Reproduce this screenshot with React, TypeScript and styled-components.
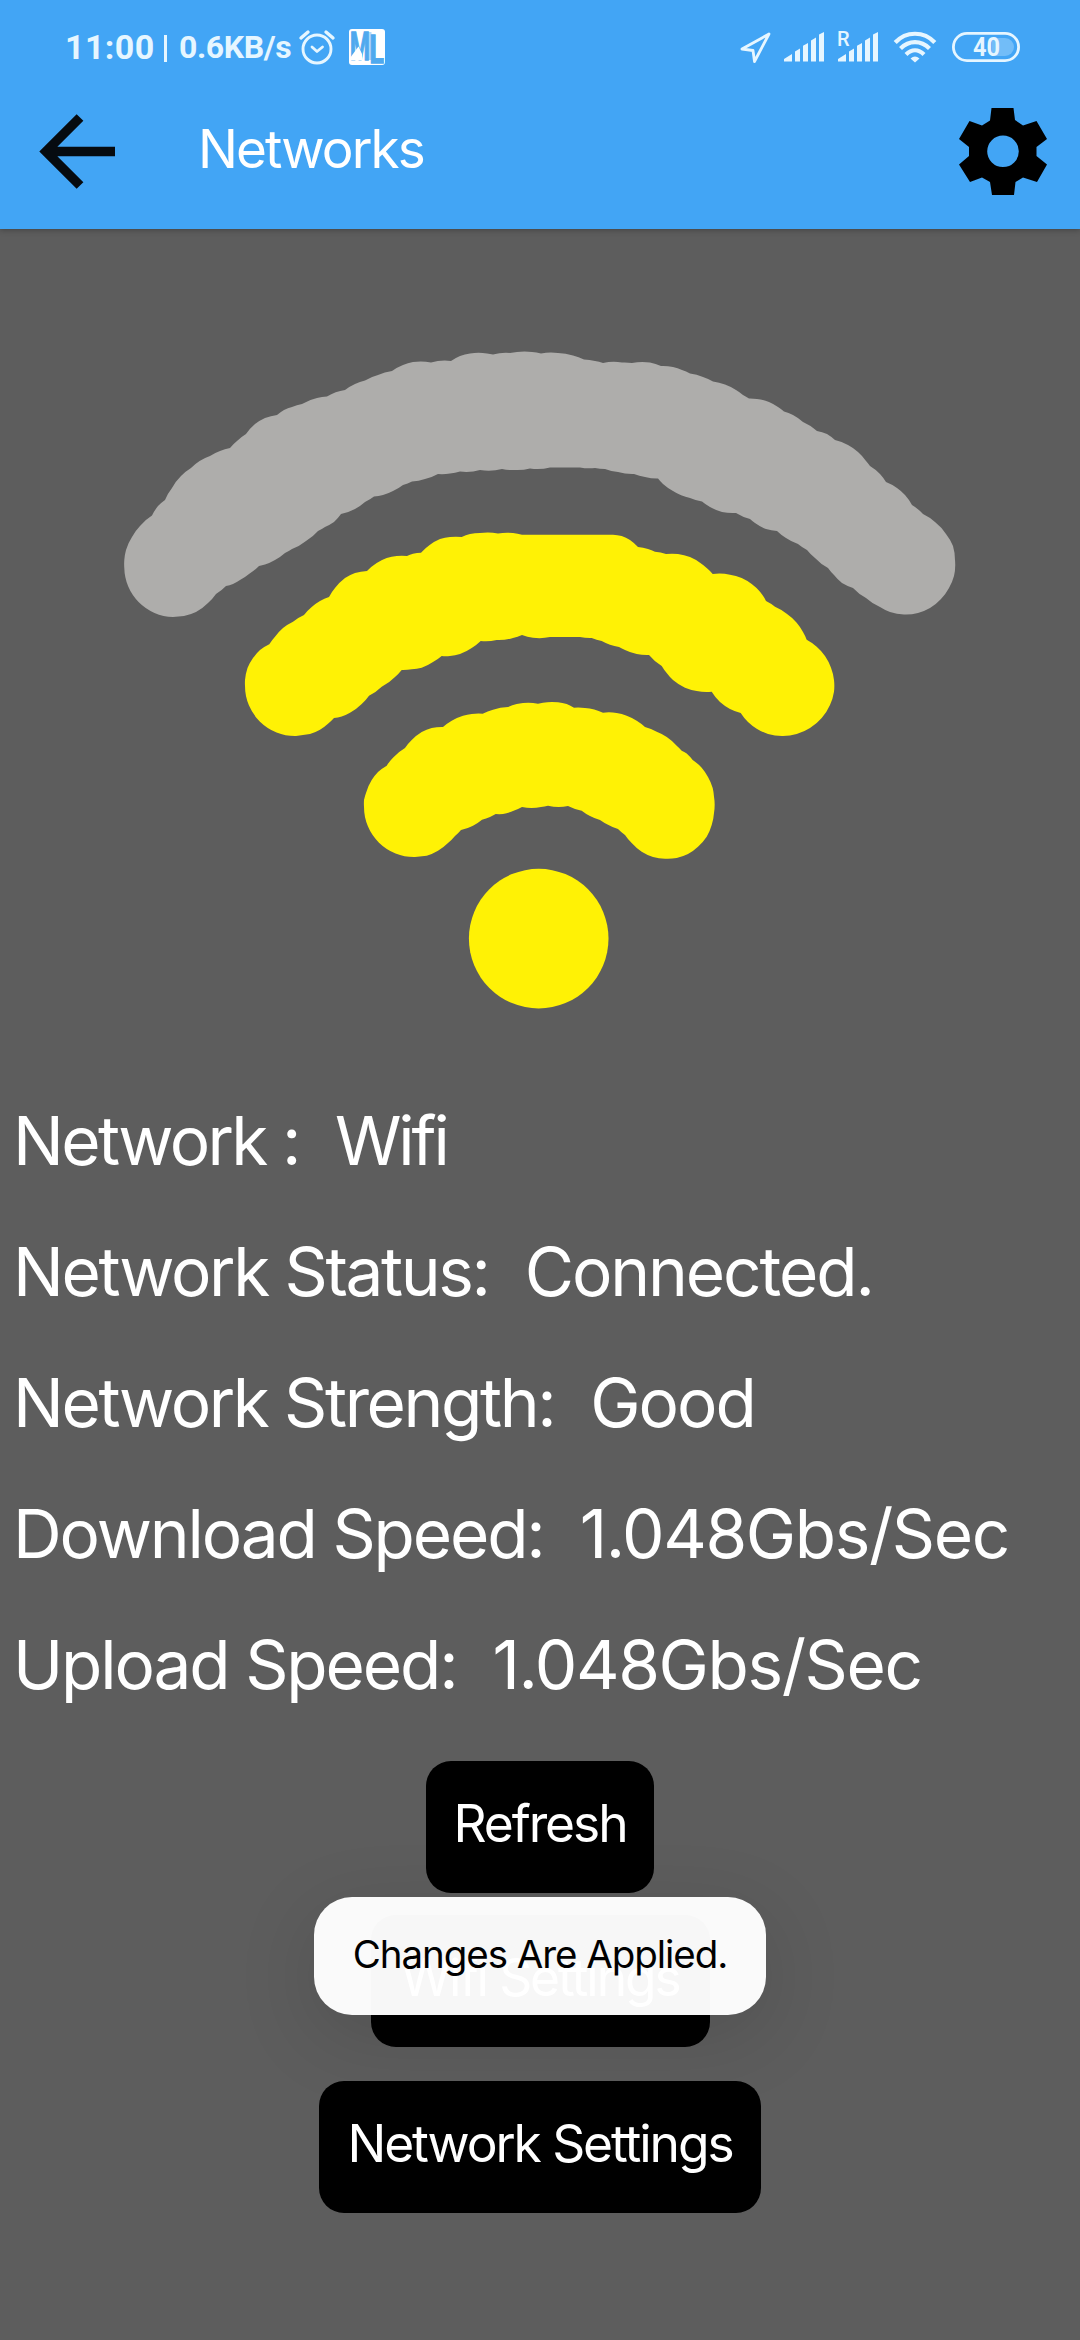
import React from "react";
import styled, { createGlobalStyle } from "styled-components";

const ICE = "#e6f6ff";

const GlobalStyle = createGlobalStyle`
  * { box-sizing: border-box; }
  html, body { margin: 0; padding: 0; background: #5d5d5d; }
`;

const Screen = styled.div`
  width: 1080px;
  height: 2340px;
  display: flex;
  flex-direction: column;
  overflow: hidden;
  background: #5d5d5d;
  color: #fff;
  font-family: Inter, "Liberation Sans", sans-serif;
`;

const Header = styled.header`
  flex: none;
  height: 229px;
  background: #42a5f5;
  box-shadow: 0 1px 6px rgba(0, 0, 0, 0.3);
`;

const StatusBar = styled.div`
  height: 94px;
  padding: 0 60px 0 65px;
  display: flex;
  justify-content: space-between;
  align-items: center;
  color: ${ICE};
  font-family: Roboto, "Liberation Sans", sans-serif;
  font-weight: 700;
`;

const StatusGroup = styled.div`
  display: flex;
  align-items: center;
`;

const Clock = styled.span`
  width: 100px;
  font-size: 34px;
  line-height: 40px;
  letter-spacing: 0.4px;
`;

const Divider = styled.span`
  width: 3px;
  height: 27px;
  margin: 2px 12px 0 -1px;
  background: ${ICE};
`;

const Rate = styled.span`
  width: 120px;
  font-size: 32px;
  line-height: 40px;
  letter-spacing: -0.4px;
`;

const Glyph = styled.svg<{ $gap?: number }>`
  display: block;
  flex: none;
  overflow: visible;
  margin-left: ${(p) => p.$gap ?? 0}px;
`;

const AppBar = styled.div`
  height: 116px;
  padding: 0 33px 0 39px;
  display: flex;
  align-items: center;
`;

const Title = styled.h1`
  flex: 1;
  margin: 0 0 0 79px;
  padding-bottom: 6px;
  font-size: 53px;
  line-height: 64px;
  font-weight: 400;
  letter-spacing: -1.9px;
`;

const Signal = styled.svg`
  display: block;
  flex: none;
`;

const Details = styled.dl`
  margin: 0;
  padding-left: 13px;
`;

const Detail = styled.div`
  display: flex;
  height: 131px;
  gap: 36px;
  font-size: 67.5px;
  line-height: 131px;
  white-space: pre;
`;

const Label = styled.dt<{ $tracking: number }>`
  letter-spacing: ${(p) => p.$tracking}px;
`;

const Value = styled.dd<{ $tracking: number }>`
  margin: 0;
  letter-spacing: ${(p) => p.$tracking}px;
`;

const Actions = styled.div`
  display: flex;
  flex-direction: column;
  align-items: center;
  padding-top: 31px;
`;

const Action = styled.button<{ $width: number; $top?: number }>`
  width: ${(p) => p.$width}px;
  height: 132px;
  margin: ${(p) => p.$top ?? 0}px 0 0;
  padding: 0 0 8px;
  border: 0;
  border-radius: 25px;
  background: #000;
  color: #fff;
  font-family: inherit;
  font-size: 51.5px;
  letter-spacing: -2.1px;
  white-space: nowrap;
`;

const Toast = styled.div`
  position: absolute;
  left: 314px;
  top: 1897px;
  width: 452px;
  height: 118px;
  padding-bottom: 4px;
  display: flex;
  align-items: center;
  justify-content: center;
  border-radius: 38px;
  background: rgba(255, 255, 255, 0.97);
  box-shadow: 0 20px 80px rgba(0, 0, 0, 0.13);
  color: #000;
  font-size: 38.5px;
  letter-spacing: -1.05px;
  white-space: nowrap;
`;

const BRUSH_RADIUS = 50;

// Joins an outline's points the way a round brush leaves them: the first
// segment is the rounded tip, short segments bulge outwards, long ones are flat.
const brushOutline = (outline: string) => {
  const points = outline.split(",").map((p) => p.trim().split(" ").map(Number));
  return points
    .map(([x, y], i) => {
      if (i === 0) return `M${x} ${y}`;
      const [px, py] = points[i - 1];
      const short = Math.hypot(x - px, y - py) < 26;
      return i === 1 || short
        ? `A${BRUSH_RADIUS} ${BRUSH_RADIUS} 0 0 1 ${x} ${y}`
        : `L${x} ${y}`;
    })
    .join("") + "Z";
};

const outerArc = brushOutline(
  "173 617,124.3 568,124.3 560,126 550,132 537,140 526,152 515.5,158 506,165 500,172 488,181 476,191 468,210 456,220 451,230 448,237 441,246 434,255 424,265 418,277 415,284 410,292 407,302 404,317 398,327 396.5,345 390,355 384,365 380.5,378 375,392 371,403 365,413 362,431 362.5,451 361,460 356,470 353.5,487 353.5,493 354.5,510 353,517 352,532 352,541 353.5,558 353,573 355.5,584 359.5,595 361,603 363,622 362.5,632 363,650 362.5,661 366,673 367,682 370,690 373.5,703 377,713 381.5,725 384.5,736 390,743 395,749 398.5,757 399,769 402,778 407,784 411.5,793 415,803 422,817 431,827 434,835 440,848 445,858 452,866 461,870 466,880 474,886 482,897 488,905 495,912 505,923 514,935 522,946 534,953 546,955 560,954 576,949 588,941 599,930 608,918 613,904 614.5,890 612,880 607,866 598,853 588,842 583,834 575,828 568,815 558,807 550,798 544,786 538,777 531,766 529,755 523,750 519,736 513,722 512,710 507,702 501.5,690 498,673 491,663 484,658 478.5,645 477,634 474,618 472,605 469,595 468,580 467.5,550 467.5,530 468.5,515 470,502 469,480 470,460 471.5,450 473.5,438 474,425 479,412 481.5,403 485,393 491,383 495,374 496.5,365 502,355 509,341 514,334 522,325 527,318 531,306 541,292 549,285 553,275 560,265 564.5,259 566,249 574,240 580,233 584,226 586,216 594,208 603,196 612,184 616"
);

const middleArc = brushOutline(
  "296 736,245 686,245 680,247.5 668,253 658,260 650,269.3 644.3,275 636.7,283 628,293 621.7,304 615,311.7 607,320 601,329 597,335 588,345 578,355 573,367 571,376.7 563,386.7 558,396.7 556,407 556,413 553.7,421 552.7,430 544.7,440 539,450 537,461.7 537,470 534,480 533,498 533.5,513 533,522 534.7,613 534.7,621.7 536,630 540,638 547,648 549,655 551.7,666 554,678 554,690 557,700 562.7,706.7 568,712.7 574,730 574.7,741.7 578,751.7 584,760 591.7,766 601,775 606.7,786.7 613.7,796.7 622.7,803 632,806.7 639.7,816.7 646.7,825 656,831 667.7,834 680,834 691.7,830 705,821.7 718,810 728,796.7 734,783 736,768 734,756.7 728.7,748 722,740.7 713,730 709,720 702,711.7 691.7,696.7 691,685 687.7,673 680,666.7 673,661.7 666,649 655,636.7 654,625 650,619 647,610 644.7,601.7 641,591.7 638,580 637,550 637,533 637.7,522 635,513 638,496.7 640,480.7 641,471.7 648,460 654,450 656,441.7 656,433 662,421.7 667.7,411.7 669.3,401.7 670,395 677,381.7 686.7,369 695.7,361.7 704,350 712.7,341.7 716.5,334 718,328 723.7,320 729.7,310 734"
);

const innerArc = brushOutline(
  "415 857,364 807,364 800,366 793,371.7 780,378 772,386.7 765.7,393 757.7,405 748,411.7 740,421.7 732,431.7 728,443 727,451.7 720.7,463 715.7,471.7 714,482.7 713.7,493 709.7,508 707,516.7 704,523 703,538 703.7,543 702.7,558 702.3,566.7 704,574 707.7,585 708,603 712.7,616.7 713,626.7 715.7,636.7 720.7,645 727,656.7 731.7,676.7 745.7,681.7 750.7,686.7 753.5,692.7 760,701.7 767.7,708 777,712.7 788,714 796.7,714 813,711.7 825,706.7 836.7,698 846.7,688 854,676.7 858,665 858.7,653 857,641.7 851.7,631.7 843,625 835,618 829,608 824.7,600 820,590 816,581.7 810.7,568 806,548 805.7,541 807,522 807,513 811,503 814,495.7 814,490 817,482 819.7,473 825.7,461 830,455 836,448 843,438 850.7,426.7 855.7"
);

const AlarmIcon = () => (
  <Glyph width="36" height="36" viewBox="0 0 36 36" $gap={0} fill="none" stroke={ICE} strokeLinecap="round" strokeLinejoin="round">
    <circle cx="18" cy="20" r="14" strokeWidth="2.9" />
    <path d="M13 18L18 22.500L23.500 18" strokeWidth="2.800" />
    <path d="M2 9L9 3M34 9L27 3" strokeWidth="3.400" />
  </Glyph>
);

const BadgeIcon = () => (
  <Glyph width="36" height="36" viewBox="0 0 36 36" $gap={14}>
    <rect width="36" height="36" rx="3" fill="#fff" />
    <path d="M19 3H22.500V31H19Z" fill="#b3dcfb" />
    <g fill="#4fa9ee" stroke="#4fa9ee" strokeWidth="1.300" fontFamily="Roboto, sans-serif" fontWeight="700">
      <text transform="translate(1 30.500) scale(.58 1)" fontSize="39">M</text>
      <text transform="translate(20.500 34) scale(.7 1)" fontSize="38">L</text>
    </g>
    <path d="M1 31.500V29L9.500 17.500L13 25V31.500Z" fill="#fff" />
  </Glyph>
);

const LocationIcon = () => (
  <Glyph width="31" height="31" viewBox="0 0 31 31">
    <path d="M29 2L2 17L13 18.500L14.500 29.500Z" fill="none" stroke={ICE} strokeWidth="2.800" strokeLinejoin="round" />
  </Glyph>
);

const BarsIcon = ({ roaming = false }: { roaming?: boolean }) => (
  <Glyph width="40" height="30" viewBox="0 0 40 30" $gap={roaming ? 14 : 13} fill={ICE}>
    <path d="M0 27L8 22V29.500H0ZM11 19.500L16 16.500V29.500H11ZM19 13.800L24 11V29.500H19ZM27 8.500L32 5.500V29.500H27ZM35 2.500L40 0V29.500H35Z" />
    {roaming && (
      <text x="-1" y="13.500" fontSize="20" fontWeight="500" fontFamily="Roboto, sans-serif">
        R
      </text>
    )}
  </Glyph>
);

const SmallWifiIcon = () => (
  <Glyph width="42" height="30" viewBox="0 0 42 30" $gap={16} fill="none" stroke={ICE} strokeWidth="4.200">
    <path d="M1.200 10.500C12 -1.200 30 -1.200 40.800 10.500M6.500 16.500C15 8 27 8 35.500 16.500M12 22.500C17.500 17 24.500 17 30 22.500" />
    <path d="M16.500 26.500Q21 22.600 25.500 26.500L21 30.500Z" fill={ICE} stroke="none" />
  </Glyph>
);

const BatteryIcon = () => (
  <Glyph width="68" height="30" viewBox="0 0 68 30" $gap={16}>
    <path d="M40 6H53A9 9 0 0 1 53 24H40Z" fill="#72bdf8" />
    <rect x="1.400" y="1.400" width="65.200" height="27.200" rx="13.600" fill="none" stroke={ICE} strokeWidth="2.800" />
    <text x="34.500" y="24" textAnchor="middle" fontSize="25" fontWeight="700" fontFamily="Roboto, sans-serif" textLength="27" lengthAdjust="spacingAndGlyphs" fill={ICE}>
      40
    </text>
  </Glyph>
);

const BackIcon = () => (
  <Glyph width="80" height="80" viewBox="39 113 80 80" fill="none" stroke="#060b10" strokeWidth="9.500">
    <path d="M80 118.500L46 152.500L80 186.500M47 152.500H115" />
  </Glyph>
);

const GearIcon = () => (
  <Glyph width="88" height="88" viewBox="959 108 88 88">
    <path
      fillRule="evenodd"
      fill="#000"
      d="M991.500 108H1013.500L1015 120L1023 125.500L1036.500 121L1047 139L1036.500 147V156L1047 164.500L1037 182L1023 177.500L1015.500 182L1014 195H992L990 182L982 177.500L970 182L959 164.500L969 156V147L959 139L969.500 121L982 125.500L990 120.500ZM1003 135.500A15.800 15.800 0 1 0 1003 167.100A15.800 15.800 0 1 0 1003 135.500Z"
    />
  </Glyph>
);

const details = [
  { label: "Network :", value: "Wifi", labelTracking: -2.65, tracking: -3.1 },
  { label: "Network Status:", value: "Connected.", labelTracking: -2.35, tracking: -2.1 },
  { label: "Network Strength:", value: "Good", labelTracking: -2.4, tracking: -2 },
  { label: "Download Speed:", value: "1.048Gbs/Sec", labelTracking: -2.15, tracking: -1.4 },
  { label: "Upload Speed:", value: "1.048Gbs/Sec", labelTracking: -2.15, tracking: -1.4 },
];

export default function App() {
  return (
    <Screen>
      <GlobalStyle />
      <Header>
        <StatusBar>
          <StatusGroup>
            <Clock>11:00</Clock>
            <Divider />
            <Rate>0.6KB/s</Rate>
            <AlarmIcon />
            <BadgeIcon />
          </StatusGroup>
          <StatusGroup>
            <LocationIcon />
            <BarsIcon />
            <BarsIcon roaming />
            <SmallWifiIcon />
            <BatteryIcon />
          </StatusGroup>
        </StatusBar>
        <AppBar>
          <BackIcon />
          <Title>Networks</Title>
          <GearIcon />
        </AppBar>
      </Header>
      <Signal width="1080" height="846" viewBox="0 229 1080 846">
        <path d={outerArc} fill="#aeadab" />
        <path d={middleArc} fill="#fff205" />
        <path d={innerArc} fill="#fff205" />
        <circle cx="538.700" cy="938.600" r="69.800" fill="#fff205" />
      </Signal>
      <Details>
        {details.map(({ label, value, labelTracking, tracking }) => (
          <Detail key={label}>
            <Label $tracking={labelTracking}>{label}</Label>
            <Value $tracking={tracking}>{value}</Value>
          </Detail>
        ))}
      </Details>
      <Actions>
        <Action $width={228}>Refresh</Action>
        <Action $width={339} $top={22}>Wifi Settings</Action>
        <Action $width={442} $top={34}>Network Settings</Action>
      </Actions>
      <Toast>Changes Are Applied.</Toast>
    </Screen>
  );
}
